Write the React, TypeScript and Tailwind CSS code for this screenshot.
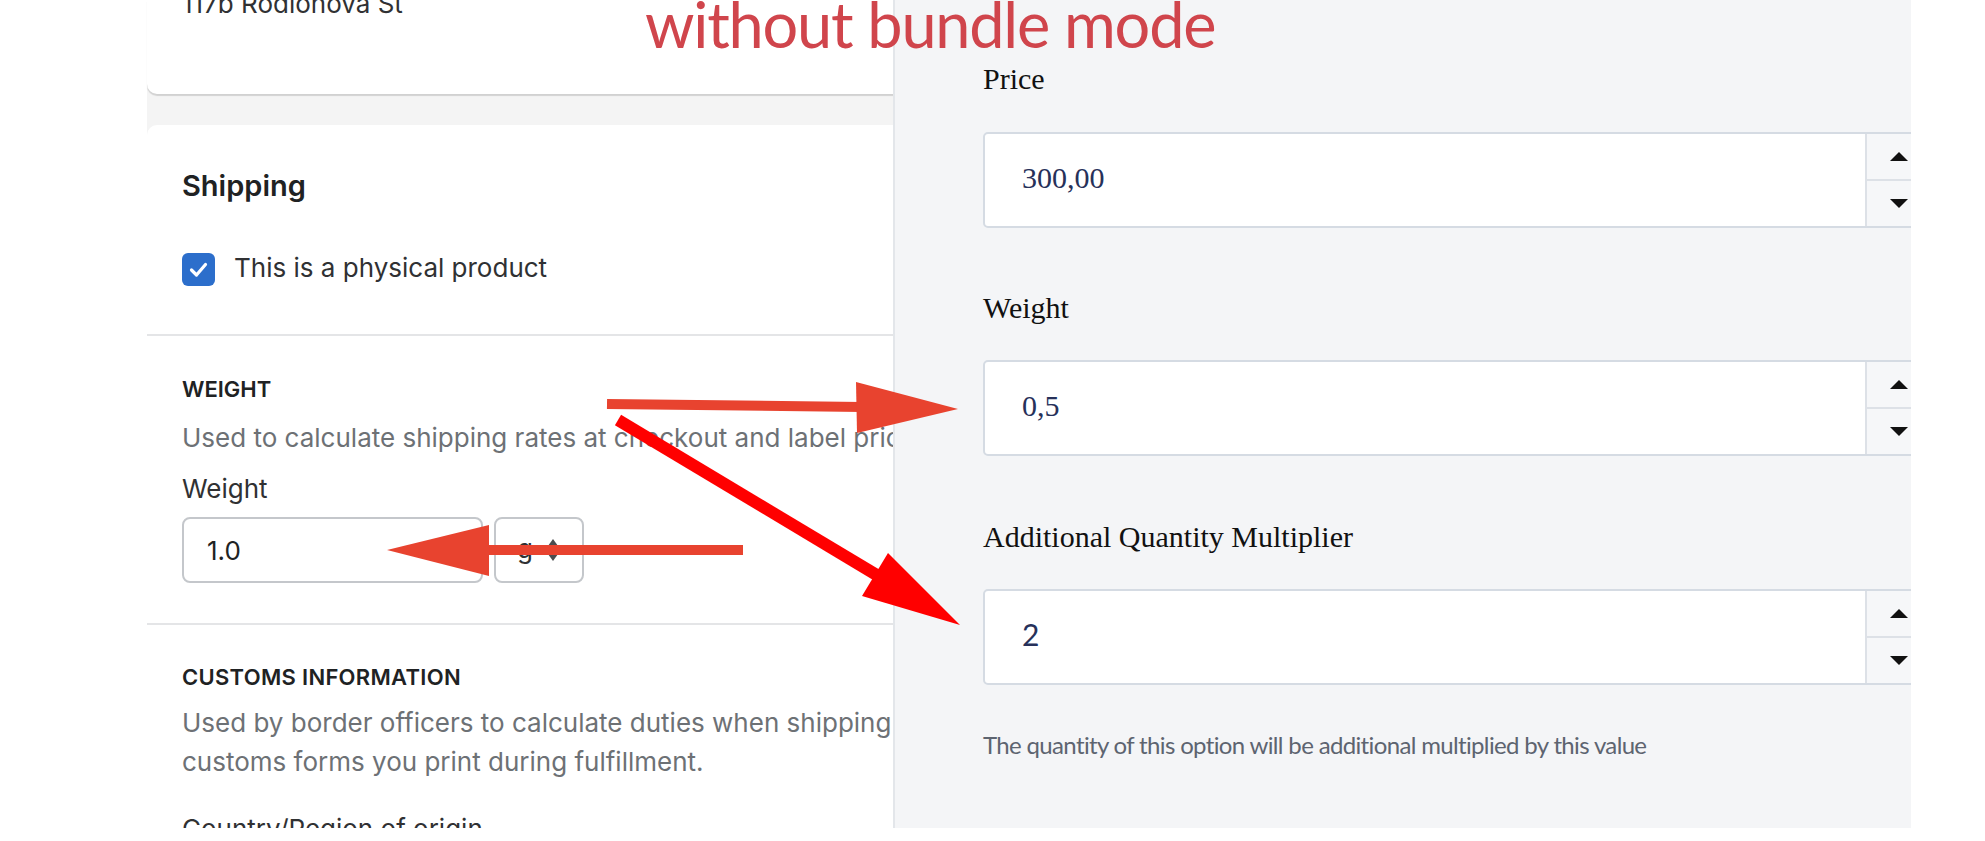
import React from 'react';

const inter = { fontFamily: 'Inter, "Noto Sans", sans-serif' };
const serif = { fontFamily: '"Liberation Serif", "Times New Roman", serif' };
const lato = { fontFamily: 'Lato, "Open Sans", sans-serif' };

function Checkbox() {
  return (
    <div className="w-[33px] h-[33px] rounded-[6px] bg-[#2c6ecb] shrink-0">
      <svg width="33" height="33" viewBox="0 0 33 33" fill="none">
        <path d="M9.5 17l5 5 9-10.5" stroke="white" strokeWidth="3.2" strokeLinecap="round" strokeLinejoin="round" />
      </svg>
    </div>
  );
}

function SelectCaret() {
  return (
    <svg width="16" height="26" viewBox="0 0 16 26" fill="#4a4d50">
      <path d="M8 2l6.5 9h-13z" />
      <path d="M8 24l6.5-9h-13z" />
    </svg>
  );
}

function LeftColumn() {
  return (
    <div className="w-[893px] h-full shrink-0 overflow-hidden bg-white pl-[147px]" style={inter}>
      <div className="w-[1100px] h-full bg-[#f4f4f4] flex flex-col">
        {/* address card, cut off at the top */}
        <div className="h-[94px] shrink-0 bg-white rounded-bl-[10px] shadow-[0_2px_1px_rgba(0,0,0,0.14)] px-[35px]">
          <div className="-mt-[14px] text-[26px] leading-[36px] text-[#303133]">117b Rodionova St</div>
        </div>

        <div className="mt-[31px] flex-1 bg-white rounded-tl-[10px]">
          {/* shipping */}
          <div className="px-[35px] pt-[43px] pb-[48px] border-b-2 border-[#e4e5e7]">
            <div className="text-[29px] leading-[36px] font-semibold text-[#202223]">Shipping</div>
            <div className="mt-[49px] flex items-start gap-[19px]">
              <Checkbox />
              <span className="-mt-[2px] text-[26px] leading-[33px] text-[#303133]">This is a physical product</span>
            </div>
          </div>

          {/* weight */}
          <div className="px-[35px] pt-[39px] pb-[40px] border-b-2 border-[#e4e5e7]">
            <div className="text-[22px] leading-[28px] font-semibold text-[#202223]">WEIGHT</div>
            <div className="mt-[17px] text-[26px] leading-[36px] text-[#6d7175] whitespace-nowrap">
              Used to calculate shipping rates at checkout and label prices.
            </div>
            <div className="mt-[15px] text-[26px] leading-[36px] text-[#303133]">Weight</div>
            <div className="mt-[10px] flex gap-[11px]">
              <div className="w-[301px] h-[66px] border-2 border-[#c4c7cb] rounded-[8px] pl-[23px] flex items-center text-[26px] text-[#202223]">
                1.0
              </div>
              <div className="w-[90px] h-[66px] border-2 border-[#c4c7cb] rounded-[8px] flex items-center justify-center gap-[12px] text-[26px] text-[#303133]">
                <span className="mb-[4px]">g</span>
                <SelectCaret />
              </div>
            </div>
          </div>

          {/* customs */}
          <div className="px-[35px] pt-[38px]">
            <div className="text-[22px] leading-[28px] font-semibold tracking-[0.3px] text-[#202223]">CUSTOMS INFORMATION</div>
            <div className="mt-[12px] text-[26px] leading-[39px] text-[#6d7175] whitespace-nowrap">
              Used by border officers to calculate duties when shipping internationally. Shown on
              <br />
              customs forms you print during fulfillment.
            </div>
            <div className="mt-[30px] text-[26px] leading-[36px] text-[#303133]">Country/Region of origin</div>
          </div>
        </div>
      </div>
    </div>
  );
}

function NumberField({ value, sans }: { value: string; sans?: boolean }) {
  return (
    <div className="w-[950px] h-[96px] bg-white border-2 border-[#d5dbe3] rounded-[5px] flex overflow-hidden">
      <div
        className="flex-1 flex items-center pl-[37px] pb-[6px] text-[30px] text-[#27315a]"
        style={sans ? lato : serif}
      >
        {value}
      </div>
      <div className="w-[66px] border-l-2 border-[#dde1e7] bg-[#f6f7f9] flex flex-col">
        <div className="flex-1 flex items-center justify-center border-b-2 border-[#dde1e7]">
          <svg width="22" height="11" viewBox="0 0 22 11"><path d="M11 1l9 9H2z" fill="#111" /></svg>
        </div>
        <div className="flex-1 flex items-center justify-center">
          <svg width="22" height="11" viewBox="0 0 22 11"><path d="M11 10l9-9H2z" fill="#111" /></svg>
        </div>
      </div>
    </div>
  );
}

function RightPanel() {
  return (
    <div className="w-[1018px] h-full shrink-0 overflow-hidden bg-[#f4f5f7] border-l-2 border-[#e3e6ea] pl-[88px] pt-[61px]">
      <div className="text-[30px] leading-[36px] text-[#111111]" style={serif}>Price</div>
      <div className="mt-[35px]">
        <NumberField value="300,00" />
      </div>

      <div className="mt-[62px] text-[30px] leading-[36px] text-[#111111]" style={serif}>Weight</div>
      <div className="mt-[34px]">
        <NumberField value="0,5" />
      </div>

      <div className="mt-[63px] text-[30px] leading-[36px] text-[#111111]" style={serif}>Additional Quantity Multiplier</div>
      <div className="mt-[34px]">
        <NumberField value="2" sans />
      </div>

      <div className="mt-[45px] text-[24px] leading-[30px] tracking-[-0.65px] text-[#5d6470]" style={lato}>
        The quantity of this option will be additional multiplied by this value
      </div>
    </div>
  );
}

function Arrows() {
  return (
    <svg className="absolute inset-0 pointer-events-none" width="1985" height="841" viewBox="0 0 1985 841">
      {/* to the panel's weight field */}
      <line x1="607" y1="404" x2="862" y2="407" stroke="#e8432f" strokeWidth="10" />
      <polygon points="856,382 958,409 857,433" fill="#e8432f" />
      {/* to the multiplier field */}
      <line x1="618" y1="420" x2="880" y2="577" stroke="#ff0000" strokeWidth="12" />
      <polygon points="888,553 960,625 862,596" fill="#ff0000" />
      {/* back to the shop's weight input */}
      <line x1="485" y1="550" x2="743" y2="550" stroke="#e8432f" strokeWidth="10" />
      <polygon points="489,525 387,550 489,576" fill="#e8432f" />
    </svg>
  );
}

export default function App() {
  return (
    <div className="relative w-[1985px] h-[841px] bg-white overflow-hidden">
      <div className="flex h-[828px]">
        <LeftColumn />
        <RightPanel />
      </div>

      <Arrows />
      <div
        className="absolute left-[645px] top-[-8px] text-[63px] leading-[63px] tracking-[-1.2px] text-[#d0454c] whitespace-nowrap pointer-events-none"
        style={lato}
      >
        without bundle mode
      </div>
    </div>
  );
}
